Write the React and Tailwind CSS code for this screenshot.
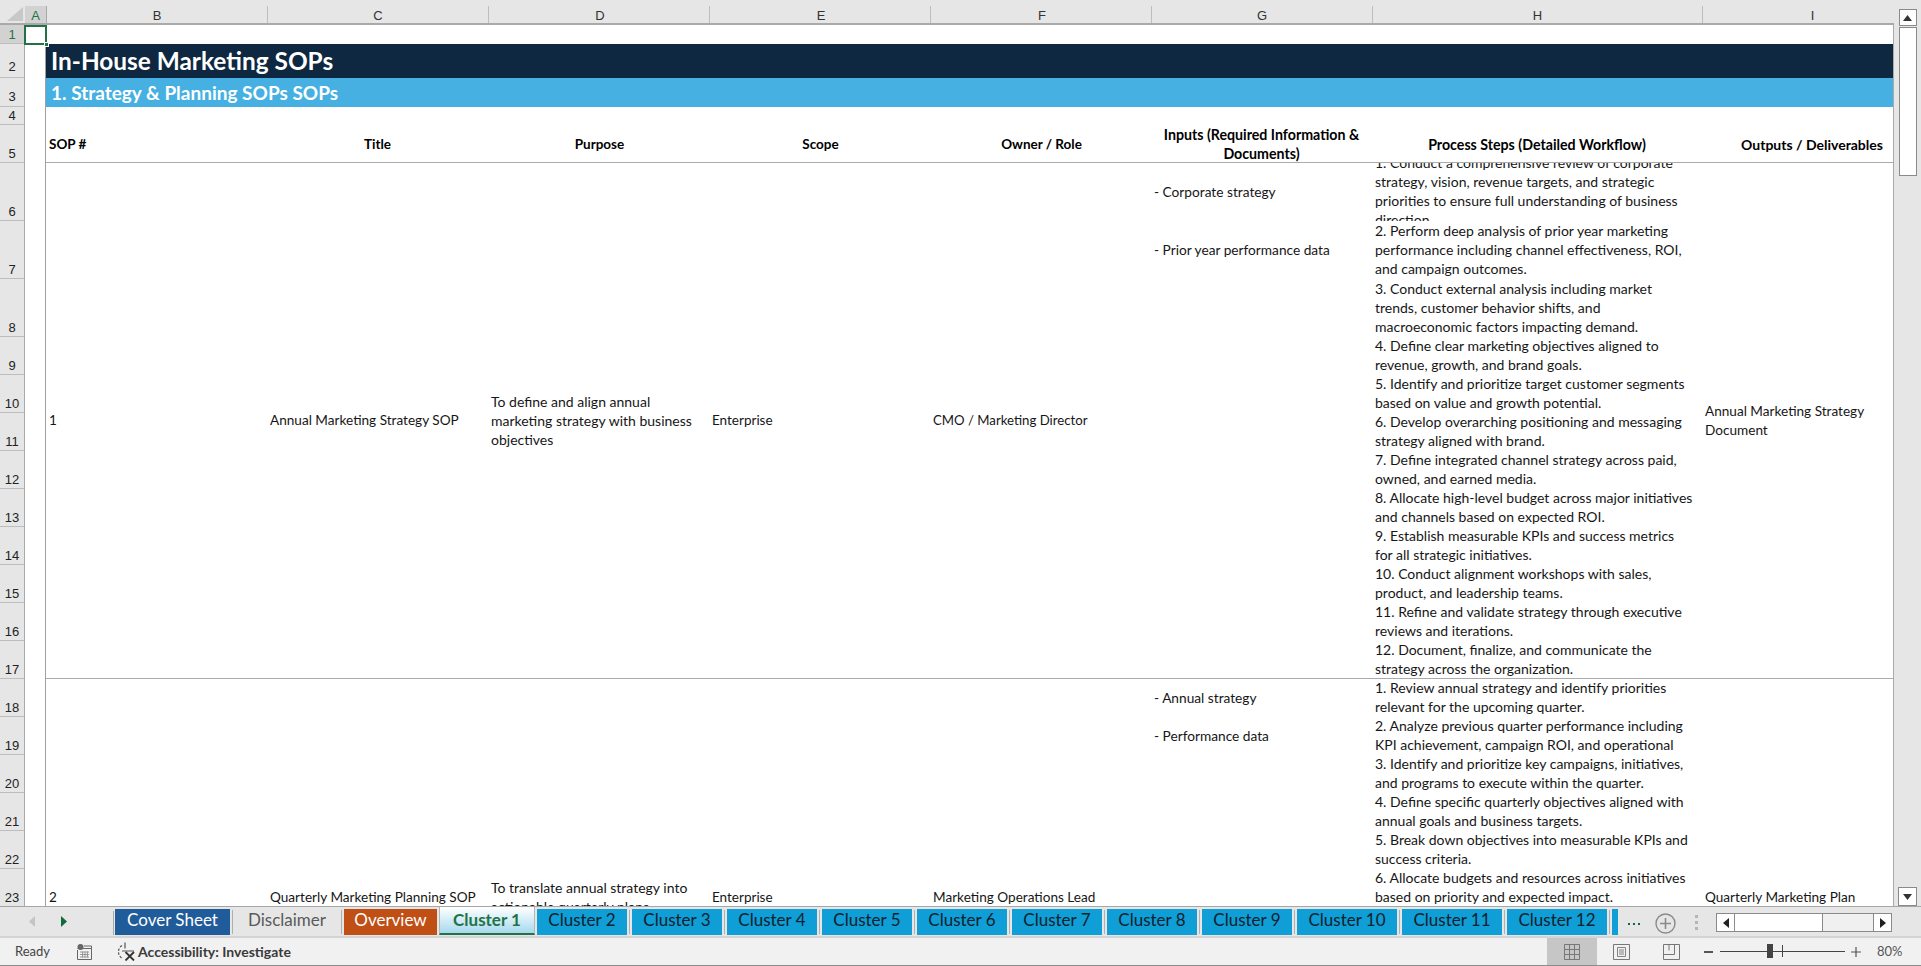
import React from "react";

const sans = "font-['Lato',sans-serif]";

const columns = [
  { label: "B", w: "w-[221px]" },
  { label: "C", w: "w-[221px]" },
  { label: "D", w: "w-[221px] pl-[2px]" },
  { label: "E", w: "w-[221px] pl-[2px]" },
  { label: "F", w: "w-[221px] pl-[2px]" },
  { label: "G", w: "w-[221px]" },
  { label: "H", w: "w-[330px]" },
  { label: "I", w: "w-[220px]" },
];

const rowHeaders = [
  [1, "h-[19px]"], [2, "h-[34px] pb-[2px]"], [3, "h-[29px] pb-px"], [4, "h-[18px]"], [5, "h-[38px]"],
  [6, "h-[58px]"], [7, "h-[58px]"], [8, "h-[58px]"],
  [9, "h-[38px]"], [10, "h-[38px]"], [11, "h-[38px]"], [12, "h-[38px]"], [13, "h-[38px]"],
  [14, "h-[38px]"], [15, "h-[38px]"], [16, "h-[38px]"], [17, "h-[38px]"],
  [18, "h-[38px]"], [19, "h-[38px]"], [20, "h-[38px]"], [21, "h-[38px]"], [22, "h-[38px]"], [23, "h-[38px]"],
];

const firstSteps = [
  ["h-[58px]", ["1. Conduct a comprehensive review of corporate", "strategy, vision, revenue targets, and strategic", "priorities to ensure full understanding of business", "direction."]],
  ["h-[58px]", ["2. Perform deep analysis of prior year marketing", "performance including channel effectiveness, ROI,", "and campaign outcomes."]],
  ["h-[58px]", ["3. Conduct external analysis including market", "trends, customer behavior shifts, and", "macroeconomic factors impacting demand."]],
  ["h-[38px]", ["4. Define clear marketing objectives aligned to", "revenue, growth, and brand goals."]],
  ["h-[38px]", ["5. Identify and prioritize target customer segments", "based on value and growth potential."]],
  ["h-[38px]", ["6. Develop overarching positioning and messaging", "strategy aligned with brand."]],
  ["h-[38px]", ["7. Define integrated channel strategy across paid,", "owned, and earned media."]],
  ["h-[38px]", ["8. Allocate high-level budget across major initiatives", "and channels based on expected ROI."]],
  ["h-[38px]", ["9. Establish measurable KPIs and success metrics", "for all strategic initiatives."]],
  ["h-[38px]", ["10. Conduct alignment workshops with sales,", "product, and leadership teams."]],
  ["h-[38px]", ["11. Refine and validate strategy through executive", "reviews and iterations."]],
  ["h-[38px]", ["12. Document, finalize, and communicate the", "strategy across the organization."]],
];

const secondSteps = [
  ["h-[38px]", ["1. Review annual strategy and identify priorities", "relevant for the upcoming quarter."]],
  ["h-[38px]", ["2. Analyze previous quarter performance including", "KPI achievement, campaign ROI, and operational"]],
  ["h-[38px]", ["3. Identify and prioritize key campaigns, initiatives,", "and programs to execute within the quarter."]],
  ["h-[38px]", ["4. Define specific quarterly objectives aligned with", "annual goals and business targets."]],
  ["h-[38px]", ["5. Break down objectives into measurable KPIs and", "success criteria."]],
  ["h-[38px]", ["6. Allocate budgets and resources across initiatives", "based on priority and expected impact."]],
];

const tabs = [
  { name: "Cover Sheet", cls: "w-[115px] bg-[#1f5c99] text-white" },
  { name: "Disclaimer", cls: "w-[104px] text-[#5a5a5a]" },
  { name: "Overview", cls: "w-[93px] bg-[#c04f15] text-white" },
  { name: "Cluster 1", active: true },
  { name: "Cluster 2", cls: "w-[90px] bg-[#0f9ed5] text-[#10222e]" },
  { name: "Cluster 3", cls: "w-[90px] bg-[#0f9ed5] text-[#10222e]" },
  { name: "Cluster 4", cls: "w-[90px] bg-[#0f9ed5] text-[#10222e]" },
  { name: "Cluster 5", cls: "w-[90px] bg-[#0f9ed5] text-[#10222e]" },
  { name: "Cluster 6", cls: "w-[90px] bg-[#0f9ed5] text-[#10222e]" },
  { name: "Cluster 7", cls: "w-[90px] bg-[#0f9ed5] text-[#10222e]" },
  { name: "Cluster 8", cls: "w-[90px] bg-[#0f9ed5] text-[#10222e]" },
  { name: "Cluster 9", cls: "w-[90px] bg-[#0f9ed5] text-[#10222e]" },
  { name: "Cluster 10", cls: "w-[100px] bg-[#0f9ed5] text-[#10222e]" },
  { name: "Cluster 11", cls: "w-[100px] bg-[#0f9ed5] text-[#10222e]" },
  { name: "Cluster 12", cls: "w-[100px] bg-[#0f9ed5] text-[#10222e]" },
  { name: "", cls: "w-[6px] bg-[#0f9ed5]" },
];

function Steps({ items, w }) {
  return (
    <div className={`${w} shrink-0 flex flex-col text-[14px]`}>
      {items.map(([h, lines], i) => (
        <div key={i} className={`${h} flex flex-col justify-center overflow-hidden px-[3px] pb-[2px] leading-[19px] whitespace-nowrap shrink-0`}>
          {lines.map((l) => <div key={l} className="shrink-0">{l}</div>)}
        </div>
      ))}
    </div>
  );
}

function Merged({ w, lines, size = "" }) {
  return (
    <div className={`${w} ${size} shrink-0 flex flex-col justify-center px-[3px] leading-[19px] whitespace-nowrap`}>
      {lines.map((l) => <div key={l}>{l}</div>)}
    </div>
  );
}

function Inputs({ items, w }) {
  return (
    <div className={`${w} shrink-0 flex flex-col text-[13.700px]`}>
      {items.map(([h, t]) => (
        <div key={t} className={`${h} flex items-center px-[3px] whitespace-nowrap`}>{t}</div>
      ))}
    </div>
  );
}

function SopRow({ num, title, purpose, scope, owner, ownerSize, inputs, steps, output, h, border }) {
  return (
    <div className={`flex ${h} shrink-0 ${border}`}>
      <Merged w="w-[221px]" lines={[num]} />
      <Merged w="w-[221px]" lines={[title]} size="text-[13.600px]" />
      <Merged w="w-[221px]" lines={purpose} size="text-[14px]" />
      <Merged w="w-[221px]" lines={[scope]} />
      <Merged w="w-[221px]" lines={[owner]} size={ownerSize} />
      <Inputs w="w-[221px]" items={inputs} />
      <Steps w="w-[330px]" items={steps} />
      <Merged w="w-[192px]" lines={output} size="text-[13.600px]" />
    </div>
  );
}

function Sheet() {
  return (
    <div className={`flex flex-col w-[1847px] shrink-0 overflow-hidden bg-white text-[13.5px] text-[#161616] ${sans}`}>
      <div className="h-[19px] shrink-0" />
      <div className="h-[34px] shrink-0 bg-[#0e2841] flex items-center pl-[5px] pt-px text-[24.400px] font-bold text-white">
        In-House Marketing SOPs
      </div>
      <div className="h-[29px] shrink-0 bg-[#45b0e1] flex items-center pl-[5px] pt-px text-[19px] font-bold text-white">
        1. Strategy &amp; Planning SOPs SOPs
      </div>
      <div className="h-[18px] shrink-0" />
      <div className="h-[38px] shrink-0 flex items-center pt-px border-b border-[#ababab] font-bold leading-[19px] text-black overflow-hidden">
        <div className="w-[221px] shrink-0 pl-[3px]">SOP #</div>
        <div className="w-[221px] shrink-0 text-center">Title</div>
        <div className="w-[221px] shrink-0 pl-[2px] text-center">Purpose</div>
        <div className="w-[221px] shrink-0 pl-[2px] text-center">Scope</div>
        <div className="w-[221px] shrink-0 pl-[2px] text-center">Owner / Role</div>
        <div className="w-[221px] shrink-0 text-center text-[14.200px]">Inputs (Required Information &amp;<br />Documents)</div>
        <div className="w-[330px] shrink-0 text-center text-[14.200px]">Process Steps (Detailed Workflow)</div>
        <div className="w-[220px] shrink-0 text-center text-[14px]">Outputs / Deliverables</div>
      </div>
      <SopRow
        h="h-[516px]"
        border="border-b border-[#ababab]"
        num="1"
        title="Annual Marketing Strategy SOP"
        purpose={["To define and align annual", "marketing strategy with business", "objectives"]}
        scope="Enterprise"
        owner="CMO / Marketing Director"
        ownerSize="text-[13.200px]"
        inputs={[["h-[58px]", "- Corporate strategy"], ["h-[58px]", "- Prior year performance data"]]}
        steps={firstSteps}
        output={["Annual Marketing Strategy", "Document"]}
      />
      <SopRow
        h="h-[436px]"
        border=""
        num="2"
        title="Quarterly Marketing Planning SOP"
        purpose={["To translate annual strategy into", "actionable quarterly plans"]}
        scope="Enterprise"
        owner="Marketing Operations Lead"
        ownerSize="text-[13.600px]"
        inputs={[["h-[38px]", "- Annual strategy"], ["h-[38px]", "- Performance data"]]}
        steps={secondSteps}
        output={["Quarterly Marketing Plan"]}
      />
    </div>
  );
}

function Scrollbar() {
  return (
    <div className="w-[27px] shrink-0 flex flex-col items-center bg-[#e6e6e6]">
      <div className="w-[18px] h-[17px] mt-[9px] shrink-0 bg-white border border-[#8a8a8a] flex items-center justify-center">
        <svg width="9" height="6" viewBox="0 0 9 6"><path d="M4.5 0 9 6H0z" fill="#333" /></svg>
      </div>
      <div className="w-[18px] h-[149px] mt-[1px] shrink-0 bg-white border border-[#8a8a8a]" />
      <div className="flex-1" />
      <div className="w-[19px] h-[19px] shrink-0 bg-white border border-[#8a8a8a] flex items-center justify-center">
        <svg width="9" height="6" viewBox="0 0 9 6"><path d="M0 0h9L4.5 6z" fill="#333" /></svg>
      </div>
    </div>
  );
}

function TabStrip() {
  return (
    <div className={`h-[32px] shrink-0 flex items-start border-t border-[#a6a6a6] border-b-2 border-b-[#d4d4d4] bg-[#e6e6e6] ${sans}`}>
      <div className="w-[113px] h-full flex items-center shrink-0">
        <svg className="ml-[29px]" width="6" height="11" viewBox="0 0 6 11"><path d="M6 0v11L0 5.5z" fill="#c4c4c4" /></svg>
        <svg className="ml-[26px]" width="6" height="11" viewBox="0 0 6 11"><path d="M0 0v11l6-5.5z" fill="#0f6b3a" /></svg>
      </div>
      <div className="flex items-start h-full shrink-0 w-[1505px] overflow-hidden">
        {tabs.map((t, i) => {
          if (t.active) {
            return (
              <div key={t.name} className="w-[96px] h-[29px] -mt-px mx-[2px] pb-px shrink-0 flex items-center justify-center border border-[#b5b5b5] border-t-white border-b-2 border-b-[#217346] bg-gradient-to-b from-white to-[#a6d9ee] text-[17px] font-bold text-[#217346]">
                {t.name}
              </div>
            );
          }
          const next = tabs[i + 1];
          return (
            <React.Fragment key={t.name || "more"}>
              {i === 0 && <div className="w-px h-[24px] mt-[4px] mr-px bg-[#a8a8a8] shrink-0" />}
              <div className={`${t.cls} h-[26px] mt-[2px] pb-[4px] shrink-0 flex items-center justify-center text-[17px]`}>{t.name}</div>
              {next && !next.active && <div className="w-px h-[24px] mt-[3px] mx-[2px] bg-[#b0b0b0] shrink-0" />}
            </React.Fragment>
          );
        })}
      </div>
      <div className="w-[29px] h-[19px] flex items-end justify-center shrink-0 gap-[3px] ml-[1px] pb-[1px]">
        <div className="w-[2px] h-[2px] bg-[#0f6b3a]" />
        <div className="w-[2px] h-[2px] bg-[#0f6b3a]" />
        <div className="w-[2px] h-[2px] bg-[#0f6b3a]" />
      </div>
      <svg className="mt-[6px] ml-[7px] shrink-0" width="21" height="21" viewBox="0 0 21 21" fill="none" stroke="#8a8a8a">
        <circle cx="10.5" cy="10.5" r="9.5" strokeWidth="1.4" />
        <path d="M10.5 5v11M5 10.5h11" strokeWidth="1.6" />
      </svg>
      <div className="ml-[19px] mt-[8px] flex flex-col gap-[3px] shrink-0">
        <div className="w-[3px] h-[3px] bg-[#b5b5b5]" />
        <div className="w-[3px] h-[3px] bg-[#b5b5b5]" />
        <div className="w-[3px] h-[3px] bg-[#b5b5b5]" />
      </div>
      <div className="ml-[18px] mt-[6px] flex h-[19px] w-[176px] shrink-0 border border-[#8a8a8a] bg-[#f0f0f0]">
        <div className="w-[18px] bg-white border-r border-[#8a8a8a] flex items-center justify-center">
          <svg width="6" height="10" viewBox="0 0 6 10"><path d="M6 0v10L0 5z" fill="#222" /></svg>
        </div>
        <div className="w-[88px] bg-white border-r border-[#8a8a8a]" />
        <div className="flex-1" />
        <div className="w-[18px] bg-white border-l border-[#8a8a8a] flex items-center justify-center">
          <svg width="6" height="10" viewBox="0 0 6 10"><path d="M0 0v10l6-5z" fill="#222" /></svg>
        </div>
      </div>
    </div>
  );
}

function StatusBar() {
  return (
    <div className={`flex-1 flex items-center bg-[#f1f1f1] border-b border-[#8c8c8c] text-[13px] text-[#444] ${sans}`}>
      <span className="ml-[15px] w-[62px]">Ready</span>
      <svg width="15" height="16" viewBox="0 0 15 16" fill="none">
        <circle cx="3.5" cy="3" r="3" fill="#666" />
        <path d="M7 2h7.5v2.5M.5 6v9.5h14V4.5H.5" stroke="#666" />
        <path d="M3 8h9M3 10.500h9M3 13h9M5.500 7.500v6M8 7.500v6M10.500 7.500v6" stroke="#888" strokeWidth=".8" />
      </svg>
      <svg className="ml-[25px]" width="19" height="19" viewBox="0 0 19 19" fill="none" stroke="#555" strokeWidth="1.2">
        <path d="M5 3.500a7.500 7.500 0 0 0 .5 13" strokeDasharray="2.500 1.500" />
        <path d="M8 .5v6M5 9h12" />
        <path d="M8.500 10l8.500 8.500M17 10l-8.500 8.500" stroke="#333" strokeWidth="1.8" />
      </svg>
      <span className="ml-[2px] text-[14px] font-bold text-[#3a3a3a]">Accessibility: Investigate</span>
      <div className="ml-auto w-[50px] self-stretch bg-[#c6c6c6] flex items-center justify-center">
        <svg width="16" height="16" viewBox="0 0 16 16" fill="none" stroke="#777">
          <path d="M.5.5h15v15H.5zM5.500.5v15M10.500.5v15M.5 5.500h15M.5 10.500h15" />
        </svg>
      </div>
      <div className="w-[49px] flex justify-center">
        <svg width="17" height="16" viewBox="0 0 17 16" fill="none" stroke="#777">
          <path d="M.5.5h16v15H.5z" />
          <path d="M4.500 3.500h8v9h-8zM6 6h5M6 8h5M6 10h5" strokeWidth=".9" />
        </svg>
      </div>
      <div className="w-[50px] flex justify-center">
        <svg width="17" height="16" viewBox="0 0 17 16" fill="none" stroke="#777">
          <path d="M.5.500h16v15H.5zM.5 10.500h11V.5M6 .5v6" />
        </svg>
      </div>
      <div className="ml-[8px] w-[9px] h-[2px] bg-[#555]" />
      <div className="relative ml-[7px] w-[125px] h-px bg-[#444]">
        <div className="absolute left-[47px] -top-[7px] w-[6px] h-[14px] bg-[#444]" />
        <div className="absolute left-[62px] -top-[6px] w-px h-[12px] bg-[#444]" />
      </div>
      <svg className="ml-[6px]" width="10" height="10" viewBox="0 0 10 10" stroke="#555" strokeWidth="1.2"><path d="M5 0v10M0 5h10" /></svg>
      <span className="ml-[16px] w-[30px] mr-[14px] text-[#555] text-[13px]">80%</span>
    </div>
  );
}

export default function App() {
  return (
    <div className="w-[1921px] h-[966px] flex flex-col overflow-hidden bg-[#e6e6e6] font-['Liberation_Sans',sans-serif]">
      <div className="h-[906px] shrink-0 flex">
        <div className="w-[1894px] shrink-0 flex flex-col">
          {/* column letters */}
          <div className="h-[25px] shrink-0 pt-[6px] flex overflow-hidden border-b-2 border-[#a9a9a9] text-[13px] leading-[19px] text-[#333]">
            <div className="w-[25px] shrink-0 flex items-end justify-end pb-[2px] pr-[2px]">
              <svg width="16" height="14" viewBox="0 0 16 14"><path d="M16 0v14H0z" fill="#c8c8c8" /></svg>
            </div>
            <div className="w-[22px] shrink-0 text-center bg-[#d2d2d2] text-[#217346] border-r border-[#a9a9a9]">A</div>
            {columns.map((c) => (
              <div key={c.label} className={`${c.w} shrink-0 text-center border-r border-[#bdbdbd]`}>{c.label}</div>
            ))}
          </div>
          {/* grid body */}
          <div className="h-[881px] shrink-0 flex overflow-hidden">
            <div className="w-[25px] shrink-0 flex flex-col text-[13px] text-[#222] border-r border-[#a9a9a9]">
              {rowHeaders.map(([n, h]) => (
                <div key={n} className={`${h} shrink-0 flex items-end justify-center border-b border-[#bdbdbd] leading-[16px] ${n === 1 ? "bg-[#d2d2d2] text-[#217346]" : ""}`}>{n}</div>
              ))}
            </div>
            <div className="relative w-[21px] shrink-0 bg-white border-r border-[#a0a0a0]">
              <div className="absolute -left-[1px] top-0 w-[23px] h-[20px] border-2 border-[#217346]" />
              <div className="absolute left-[19px] top-[17px] w-[5px] h-[5px] bg-[#217346] border border-white" />
            </div>
            <Sheet />
            <div className="w-px shrink-0 bg-[#a9a9a9]" />
          </div>
        </div>
        <Scrollbar />
      </div>
      <TabStrip />
      <StatusBar />
    </div>
  );
}
